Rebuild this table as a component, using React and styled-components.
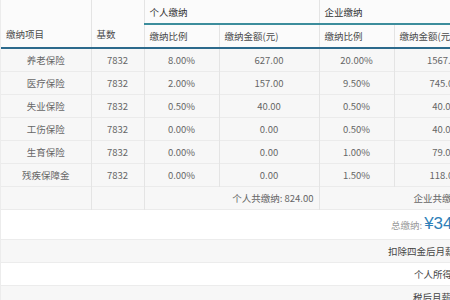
import React from "react";
import styled, { createGlobalStyle } from "styled-components";

const GlobalStyle = createGlobalStyle`
  html, body {
    margin: 0;
    padding: 0;
    background: #ffffff;
    overflow: hidden;
  }
  body {
    font-family: "Noto Sans CJK SC", "Noto Sans", sans-serif;
  }
`;

const rows = [
  { name: "养老保险", base: 7832, pRate: "8.00%", pAmt: "627.00", cRate: "20.00%", cAmt: "1567.00" },
  { name: "医疗保险", base: 7832, pRate: "2.00%", pAmt: "157.00", cRate: "9.50%", cAmt: "745.00" },
  { name: "失业保险", base: 7832, pRate: "0.50%", pAmt: "40.00", cRate: "0.50%", cAmt: "40.00" },
  { name: "工伤保险", base: 7832, pRate: "0.00%", pAmt: "0.00", cRate: "0.50%", cAmt: "40.00" },
  { name: "生育保险", base: 7832, pRate: "0.00%", pAmt: "0.00", cRate: "1.00%", cAmt: "79.00" },
  { name: "残疾保障金", base: 7832, pRate: "0.00%", pAmt: "0.00", cRate: "1.50%", cAmt: "118.00" },
];

function App() {
  return (
    <>
      <GlobalStyle />
      <Wrap>
        <Table>
          <colgroup>
            <col style={{ width: 90 }} />
            <col style={{ width: 53 }} />
            <col style={{ width: 75 }} />
            <col style={{ width: 100 }} />
            <col style={{ width: 75 }} />
            <col style={{ width: 100 }} />
          </colgroup>
          <thead>
            <GroupRow>
              <HeadCell rowSpan={2} $bottom>缴纳项目</HeadCell>
              <HeadCell rowSpan={2} $bottom>基数</HeadCell>
              <GroupCell colSpan={2}>个人缴纳</GroupCell>
              <GroupCell colSpan={2}>企业缴纳</GroupCell>
            </GroupRow>
            <SubRow>
              <HeadCell>缴纳比例</HeadCell>
              <HeadCell>缴纳金额(元)</HeadCell>
              <HeadCell>缴纳比例</HeadCell>
              <HeadCell>缴纳金额(元)</HeadCell>
            </SubRow>
          </thead>
          <tbody>
            {rows.map((r) => (
              <DataRow key={r.name}>
                <Cell>{r.name}</Cell>
                <Cell>{r.base}</Cell>
                <Cell>{r.pRate}</Cell>
                <Cell>{r.pAmt}</Cell>
                <Cell>{r.cRate}</Cell>
                <Cell>{r.cAmt}</Cell>
              </DataRow>
            ))}
            <DataRow>
              <Cell />
              <Cell />
              <SumCell colSpan={2} $align="right">个人共缴纳: 824.00</SumCell>
              <SumCell colSpan={2} $indent={94}>企业共缴纳: 2589.00</SumCell>
            </DataRow>
            <FootRow $tall>
              <FootCell colSpan={6} $indent={390}>
                <Label>总缴纳:</Label>
                <Total>¥3413.00</Total>
              </FootCell>
            </FootRow>
            <FootRow $gray>
              <FootCell colSpan={6} $indent={387}>
                <Dark>扣除四金后月薪: 7008.00</Dark>
              </FootCell>
            </FootRow>
            <FootRow>
              <FootCell colSpan={6} $indent={413}>
                <Dark>个人所得税: 146.60</Dark>
              </FootCell>
            </FootRow>
            <FootRow $gray>
              <FootCell colSpan={6} $indent={412}>
                <Dark>税后月薪: 6861.40</Dark>
              </FootCell>
            </FootRow>
          </tbody>
        </Table>
      </Wrap>
    </>
  );
}

const Wrap = styled.div`
  width: 540px;
  border-left: 1px solid #ececec;
`;

const Table = styled.table`
  width: 493px;
  border-collapse: collapse;
  table-layout: fixed;
  font-size: 9.5px;
  color: #666;
`;

const GroupRow = styled.tr`
  height: 24px;
  background: #fbfbfb;
`;

const SubRow = styled.tr`
  height: 24px;
  background: #fbfbfb;
  border-bottom: 2px solid #2c6a8c;
`;

const HeadCell = styled.th`
  font-weight: normal;
  text-align: left;
  color: #4a4a4a;
  padding: 0 5px;
  vertical-align: ${(p) => (p.$bottom ? "bottom" : "middle")};
  padding-bottom: ${(p) => (p.$bottom ? "6px" : "0")};
  border-right: 1px solid #e4e4e4;
  white-space: nowrap;
`;

const GroupCell = styled.th`
  font-weight: normal;
  text-align: left;
  color: #333;
  padding: 0 5px;
  border-right: 1px solid #e4e4e4;
  border-bottom: 2px solid #3c8d9c;
  white-space: nowrap;
`;

const DataRow = styled.tr`
  height: 23px;
  background: #f7f7f7;
  border-bottom: 1px solid #ebebeb;
`;

const Cell = styled.td`
  text-align: center;
  padding: 0;
  border-right: 1px solid #e4e4e4;
  white-space: nowrap;
`;

const SumCell = styled.td`
  text-align: ${(p) => p.$align || "left"};
  padding: 0 5px 0 ${(p) => (p.$indent ? `${p.$indent}px` : "5px")};
  border-right: 1px solid #e4e4e4;
  white-space: nowrap;
`;

const FootRow = styled.tr`
  height: ${(p) => (p.$tall ? "30px" : "23px")};
  background: ${(p) => (p.$gray ? "#f7f7f7" : "#ffffff")};
  border-bottom: 1px solid #ececec;
`;

const FootCell = styled.td`
  padding: 0 0 0 ${(p) => p.$indent}px;
  white-space: nowrap;
`;

const Label = styled.span`
  color: #999;
  font-size: 9.5px;
`;

const Total = styled.span`
  color: #2e7fb8;
  font-size: 17px;
  margin-left: 2px;
  font-family: "Liberation Sans", "Noto Sans", sans-serif;
`;

const Dark = styled.span`
  color: #444;
`;

export default App;
